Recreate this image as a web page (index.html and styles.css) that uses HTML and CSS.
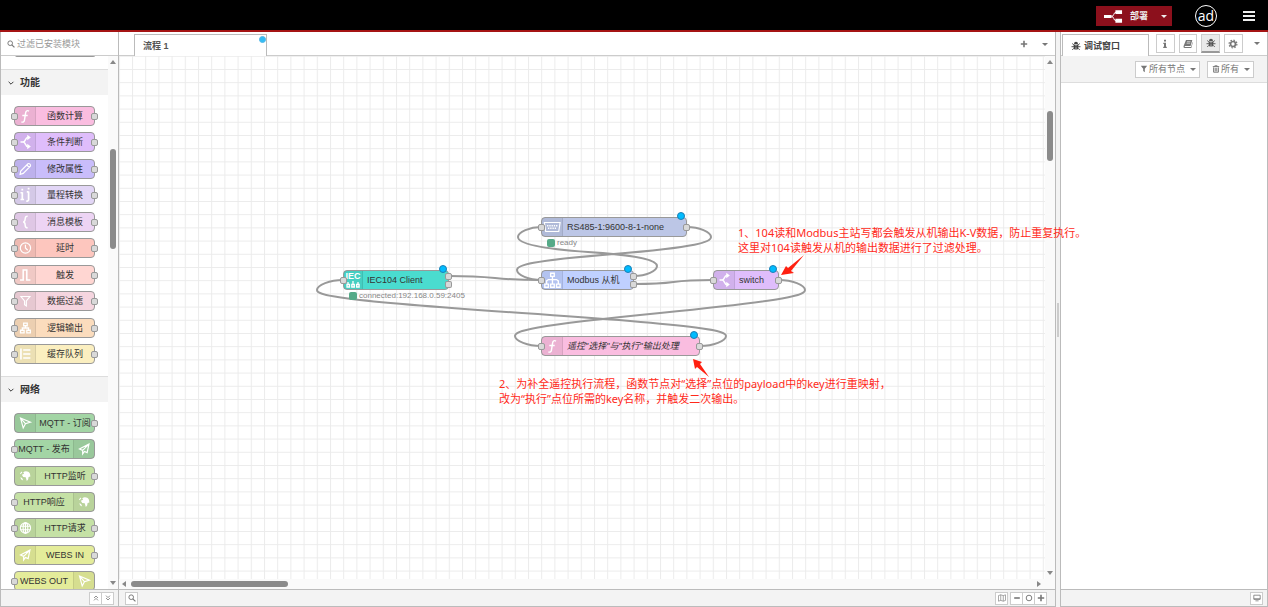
FILE: index.html
```html
<!DOCTYPE html>
<html lang="zh-CN">
<head>
<meta charset="utf-8">
<title>流程 1</title>
<link rel="stylesheet" href="styles.css">
</head>
<body>
<svg class="defs" aria-hidden="true">
  <symbol id="i-func" viewBox="0 0 20 20"><path d="M14.500 4.500c-2.500-1.200-3.600.2-3.900 2.500l-1.200 7.500c-.4 2-1.500 2.800-3.400 2M7 9.500h6" fill="none" stroke="currentColor" stroke-width="1.600"/></symbol>
  <symbol id="i-switch" viewBox="0 0 20 20"><path d="M5 10h3c3 0 2-5 5-5h1M8 10c3 0 2 5 5 5h1" fill="none" stroke="currentColor" stroke-width="1.700"/><path d="M12.500 2l4 3-4 3zM12.500 12l4 3-4 3z" fill="currentColor"/></symbol>
  <symbol id="i-edit" viewBox="0 0 20 20"><path d="M4.500 16l.8-3.800 8-8c1.500-1 3.500 1 2.700 2.700l-8 8zM12 5.500l2.800 2.800" fill="none" stroke="currentColor" stroke-width="1.300"/></symbol>
  <symbol id="i-range" viewBox="0 0 20 20"><path d="M7 7v8M5 7.500h2M5 15h4M14 6v9c0 1.500-1 2-2.500 1.500M12 6.500h2" fill="none" stroke="currentColor" stroke-width="1.900"/><path d="M6 3h2v2H6zM13 2h2v2h-2z" fill="currentColor"/></symbol>
  <symbol id="i-brace" viewBox="0 0 20 20"><path d="M13 3.500c-2.500 0-2.800.8-2.800 3 0 2.200-.4 3.300-2.200 3.500 1.800.2 2.200 1.300 2.200 3.500 0 2.200.3 3 2.800 3" fill="none" stroke="currentColor" stroke-width="1.600"/></symbol>
  <symbol id="i-clock" viewBox="0 0 20 20"><circle cx="10.500" cy="10" r="5.700" fill="none" stroke="currentColor" stroke-width="1.300"/><path d="M10.500 6.500V10l2.500 2.500" fill="none" stroke="currentColor" stroke-width="1.300"/></symbol>
  <symbol id="i-pulse" viewBox="0 0 20 20"><path d="M4.500 15.500h3.500V4.500h4v11h4" fill="none" stroke="currentColor" stroke-width="1.700"/></symbol>
  <symbol id="i-filter" viewBox="0 0 20 20"><path d="M5.500 5h10l-4 5v5.500l-2-1.500v-4z" fill="none" stroke="currentColor" stroke-width="1.300"/></symbol>
  <symbol id="i-logic" viewBox="0 0 20 20"><path d="M8.500 4.500h4v3h-4zM5 12.500h4v3H5zM12 12.500h4v3h-4zM10.500 7.500V10M7 12.500V10h7v2.500" fill="none" stroke="currentColor" stroke-width="1.400"/></symbol>
  <symbol id="i-queue" viewBox="0 0 20 20"><path d="M5.500 4v12M8 5.500h8M8 10h8M8 14.500h8" fill="none" stroke="currentColor" stroke-width="1.800"/></symbol>
  <symbol id="i-sub" viewBox="0 0 20 20"><path d="M5 4.500l11 4.500-5.500 1.700L8 15.500zM5 4.500l5.500 6.200" fill="none" stroke="currentColor" stroke-width="1.300"/></symbol>
  <symbol id="i-pub" viewBox="0 0 20 20"><path d="M15.500 4.500L5 10l3.500 1.500v4l2-2.800 3 1.300zM15.500 4.500l-7 7" fill="none" stroke="currentColor" stroke-width="1.300"/></symbol>
  <symbol id="i-earth" viewBox="0 0 20 20"><path d="M8 6c2-2 6-1.500 7.500 1.500l.5 3-2 .5-.5 3-1.500 1.500-1.200-4L8 11 6.500 8.500 9 7.500zM4.500 7l2-2 .5 1-2 2zM5 11l2 1.500 1 2.500-2.500-1.500z" fill="currentColor"/></symbol>
  <symbol id="i-globe" viewBox="0 0 20 20"><g fill="none" stroke="currentColor" stroke-width="1.200"><circle cx="10.500" cy="10" r="5.700"/><ellipse cx="10.500" cy="10" rx="2.600" ry="5.700"/><path d="M5 8h11M5 12h11M10.500 4v12"/></g></symbol>
  <symbol id="i-serial" viewBox="0 0 20 20"><path d="M1.500 5h17.500l-1.500 10H3z" fill="none" stroke="currentColor" stroke-width="1.300"/><path d="M4.500 8.500h12M5.500 11.500h10" fill="none" stroke="currentColor" stroke-width="1.700" stroke-dasharray="1.500 1"/></symbol>
  <symbol id="i-tree" viewBox="0 0 20 20"><path d="M8.500 2.500h4v3.500h-4zM2 14.500h4V18H2zM8.500 14.500h4V18h-4zM15 14.500h4V18h-4zM10.500 6v8.500M4 14.500V11l2-1.500h9l2 1.500v3.500" fill="none" stroke="currentColor" stroke-width="1.500"/></symbol>
  <symbol id="i-bus" viewBox="0 0 16 7"><path d="M3 3V1M8 3V0M13 3V1M2 3.500h2.500v2.500H2zM6.800 3.500h2.500v2.500H6.800zM11.600 3.500h2.500v2.500h-2.500z" fill="none" stroke="currentColor" stroke-width="1.300"/></symbol>
  <symbol id="i-search" viewBox="0 0 10 10"><circle cx="4" cy="4" r="2.900" fill="none" stroke="currentColor" stroke-width="1.200"/><path d="M6 6l3.300 3.300" stroke="currentColor" stroke-width="1.500"/></symbol>
  <symbol id="i-bug" viewBox="0 0 10 10"><path d="M3 3a2 2.200 0 0 1 4 0z" fill="currentColor"/><path d="M2.700 3.600h2v5.200c-1.200 0-2-.8-2-2.200zM5.300 3.600h2v3c0 1.400-.8 2.200-2 2.200z" fill="currentColor"/><path d="M1.200 2.500l1.800 1.600M8.800 2.500L7 4.100M.5 5.700h9M1.200 9L3 7.200M8.800 9L7 7.200" stroke="currentColor" stroke-width=".9"/></symbol>
  <symbol id="i-info" viewBox="0 0 10 10"><path d="M4 .8h2v1.800H4zM3.300 3.800H6v4h.8V9H3.200V7.800H4V5h-.7z" fill="currentColor"/></symbol>
  <symbol id="i-book" viewBox="0 0 10 10"><path d="M3 1h6.300L7.600 7H2.100c-.7 0-.6 1 0 1H8l1.500-5 .3.500L8.300 9H1.700C.4 9 .3 7.800.7 6.800z" fill="currentColor"/><path d="M4 2.700h3.500M3.600 4.200h3.500" stroke="#fff" stroke-width=".6"/></symbol>
  <symbol id="i-gear" viewBox="0 0 10 10"><circle cx="5" cy="5" r="2.500" fill="none" stroke="currentColor" stroke-width="1.700"/><circle cx="5" cy="5" r="3.900" fill="none" stroke="currentColor" stroke-width="1.200" stroke-dasharray="1.500 1.560"/></symbol>
  <symbol id="i-funnel" viewBox="0 0 10 10"><path d="M1 1h8L6 4.700V9L4 7.500V4.700z" fill="currentColor"/></symbol>
  <symbol id="i-trash" viewBox="0 0 10 10"><path d="M1 2h8M3.500 2V1h3v1M2 3v6h6V3M4 3.500V8M6 3.500V8" fill="none" stroke="currentColor" stroke-width="1.200"/></symbol>
  <symbol id="i-chev" viewBox="0 0 10 10"><path d="M2 3.500l3 3 3-3" fill="none" stroke="currentColor" stroke-width="1.200"/></symbol>
  <symbol id="i-up2" viewBox="0 0 10 10"><path d="M2.500 5L5 2.500 7.500 5M2.500 8L5 5.500 7.500 8" fill="none" stroke="currentColor" stroke-width="1"/></symbol>
  <symbol id="i-down2" viewBox="0 0 10 10"><path d="M2.500 2L5 4.500 7.500 2M2.500 5L5 7.500 7.500 5" fill="none" stroke="currentColor" stroke-width="1"/></symbol>
  <symbol id="i-map" viewBox="0 0 10 10"><path d="M.6 2l2.800-1 3.200 1 2.800-1v7l-2.800 1-3.200-1-2.800 1zM3.400 1v7M6.600 2v7" fill="none" stroke="currentColor" stroke-width=".8"/></symbol>
  <symbol id="i-minus" viewBox="0 0 10 10"><path d="M1.500 5h7" stroke="currentColor" stroke-width="2"/></symbol>
  <symbol id="i-plus" viewBox="0 0 10 10"><path d="M1 5h8M5 1v8" stroke="currentColor" stroke-width="2"/></symbol>
  <symbol id="i-circle" viewBox="0 0 10 10"><circle cx="5" cy="5" r="3.500" fill="none" stroke="currentColor" stroke-width="1.200"/></symbol>
  <symbol id="i-screen" viewBox="0 0 10 10"><path d="M1 1.500h8v5H1z" fill="none" stroke="currentColor"/><path d="M1 5.500h8v1.500H1zM3 8h4v1H3z" fill="currentColor"/></symbol>
</svg>

<header class="header">
  <button class="deploy" type="button">
    <svg class="deploy-icon" viewBox="0 0 20 14"><path d="M0 6h8v3H0zM12 1h7v4h-7zM12 10h7v4h-7z" fill="#fff"/><path d="M8 7.500c3 0 1.500-4.500 5-4.500M8 7.500c3 0 1.500 4.500 5 4.500" fill="none" stroke="#fff"/></svg>
    <span>部署</span><i class="caret"></i>
  </button>
  <button class="avatar" type="button">ad</button>
  <button class="menu" type="button" aria-label="菜单"><i></i><i></i><i></i></button>
</header>

<div class="main">
  <aside class="palette">
    <label class="search"><svg class="ic"><use href="#i-search"/></svg><input type="text" placeholder="过滤已安装模块" aria-label="过滤已安装模块"></label>
    <div class="palette-body">
      <div class="palette-list">
        <div class="node-remnant"></div>
        <button class="category" type="button"><svg class="ic"><use href="#i-chev"/></svg>功能</button>
        <div class="nodes nodes-func">
          <div class="node in out c-func"><span class="icon"><svg><use href="#i-func"/></svg></span><span class="label">函数计算</span></div>
          <div class="node in out c-switch"><span class="icon"><svg><use href="#i-switch"/></svg></span><span class="label">条件判断</span></div>
          <div class="node in out c-change"><span class="icon"><svg><use href="#i-edit"/></svg></span><span class="label">修改属性</span></div>
          <div class="node in out c-range"><span class="icon"><svg><use href="#i-range"/></svg></span><span class="label">量程转换</span></div>
          <div class="node in out c-template"><span class="icon"><svg><use href="#i-brace"/></svg></span><span class="label">消息模板</span></div>
          <div class="node in out c-delay"><span class="icon"><svg><use href="#i-clock"/></svg></span><span class="label">延时</span></div>
          <div class="node in out c-trigger"><span class="icon"><svg><use href="#i-pulse"/></svg></span><span class="label">触发</span></div>
          <div class="node in out c-filter"><span class="icon"><svg><use href="#i-filter"/></svg></span><span class="label">数据过滤</span></div>
          <div class="node in out c-logic"><span class="icon"><svg><use href="#i-logic"/></svg></span><span class="label">逻辑输出</span></div>
          <div class="node in out c-queue"><span class="icon"><svg><use href="#i-queue"/></svg></span><span class="label">缓存队列</span></div>
        </div>
        <button class="category" type="button"><svg class="ic"><use href="#i-chev"/></svg>网络</button>
        <div class="nodes nodes-net">
          <div class="node out c-mqtt"><span class="icon"><svg><use href="#i-sub"/></svg></span><span class="label">MQTT - 订阅</span></div>
          <div class="node in flip c-mqtt"><span class="icon"><svg><use href="#i-pub"/></svg></span><span class="label">MQTT - 发布</span></div>
          <div class="node out c-http"><span class="icon"><svg><use href="#i-earth"/></svg></span><span class="label">HTTP监听</span></div>
          <div class="node in flip c-http"><span class="icon"><svg><use href="#i-earth"/></svg></span><span class="label">HTTP响应</span></div>
          <div class="node in out c-http"><span class="icon"><svg><use href="#i-globe"/></svg></span><span class="label">HTTP请求</span></div>
          <div class="node out c-ws"><span class="icon"><svg><use href="#i-pub"/></svg></span><span class="label">WEBS IN</span></div>
          <div class="node in flip c-ws"><span class="icon"><svg><use href="#i-sub"/></svg></span><span class="label">WEBS OUT</span></div>
        </div>
      </div>
      <div class="vbar"><i class="arrow up"></i><i class="thumb thumb-palette"></i><i class="arrow down"></i></div>
    </div>
    <footer class="foot foot-palette">
      <button class="fbtn" type="button" aria-label="全部折叠"><svg class="ic"><use href="#i-up2"/></svg></button>
      <button class="fbtn" type="button" aria-label="全部展开"><svg class="ic"><use href="#i-down2"/></svg></button>
    </footer>
  </aside>

  <main class="workspace">
    <div class="tabs">
      <button class="tab" type="button">流程 1<i class="dot tab-dot"></i></button>
      <button class="plain" type="button" aria-label="新增"><svg class="ic"><use href="#i-plus"/></svg></button>
      <button class="plain" type="button" aria-label="流程列表"><i class="caret"></i></button>
    </div>
    <div class="chart">
      <div class="canvas">
        <svg class="wires">
          <defs>
            <pattern id="grid" width="13.200" height="13.200" patternUnits="userSpaceOnUse" x="132" y="69"><path d="M0 .5h13.200M.5 0v13.200" stroke="#ebebeb" fill="none"/></pattern>
          </defs>
          <g transform="translate(-119 -56)">
            <rect x="119" y="56" width="3000" height="3000" fill="url(#grid)"/>
            <g fill="none" stroke="#999" stroke-width="2">
              <path d="M449 276C499 276 491 280 541 280"/>
              <path d="M634 284C684 284 663 280 713 280"/>
              <path d="M687 227C699 227 711 232 711 237S699 247 614 254S517 265 517 270S529 280 541 280"/>
              <path d="M634 276C646 276 657 271 657 266S646 256 588 252S518 242 518 237S530 227 541 227"/>
              <path d="M779 280C792 280 805 285 805 290S792 300 660 313S515 331 515 336S528 346 541 346"/>
              <path d="M700 346C713 346 726 341 726 336S713 326 522 313S317 295 317 290S330 280 343 280"/>
            </g>
          </g>
        </svg>
        <div class="node in out2 c-iec n-iec"><span class="icon icon-iec"><b>IEC</b><svg><use href="#i-bus"/></svg></span><span class="label">IEC104 Client</span><i class="dot"></i><span class="status">connected:192.168.0.59:2405</span></div>
        <div class="node in out c-serial n-serial"><span class="icon"><svg><use href="#i-serial"/></svg></span><span class="label">RS485-1:9600-8-1-none</span><i class="dot"></i><span class="status">ready</span></div>
        <div class="node in out2 c-modbus n-modbus"><span class="icon"><svg><use href="#i-tree"/></svg></span><span class="label">Modbus 从机</span><i class="dot"></i></div>
        <div class="node in out c-switch n-switch"><span class="icon"><svg><use href="#i-switch"/></svg></span><span class="label">switch</span><i class="dot"></i></div>
        <div class="node in out c-func n-func"><span class="icon"><svg><use href="#i-func"/></svg></span><span class="label"><em>遥控"选择"与"执行"输出处理</em></span><i class="dot"></i></div>
        <svg class="wires"><g transform="translate(-119 -56)" fill="#ff2010"><path d="M781 275l5-9 2 2 16-13-13 16 3 2z"/><path d="M693 359l9 3-2 2 9 13-12-10-2 2z"/></g></svg>
        <p class="note note-1">1、104读和Modbus主站写都会触发从机输出K-V数据，防止重复执行。<br>这里对104读触发从机的输出数据进行了过滤处理。</p>
        <p class="note note-2">2、为补全遥控执行流程，函数节点对“选择”点位的payload中的key进行重映射，<br>改为“执行”点位所需的key名称，并触发二次输出。</p>
      </div>
      <div class="vbar"><i class="arrow up"></i><i class="thumb thumb-chart"></i><i class="arrow down"></i></div>
      <div class="hbar"><i class="arrow left"></i><i class="thumb-h"></i><i class="arrow right"></i></div>
    </div>
    <footer class="foot foot-work">
      <button class="fbtn" type="button" aria-label="搜索"><svg class="ic"><use href="#i-search"/></svg></button>
      <button class="fbtn map" type="button" aria-label="导航"><svg class="ic"><use href="#i-map"/></svg></button>
      <button class="fbtn" type="button" aria-label="缩小"><svg class="ic"><use href="#i-minus"/></svg></button>
      <button class="fbtn" type="button" aria-label="重置"><svg class="ic"><use href="#i-circle"/></svg></button>
      <button class="fbtn" type="button" aria-label="放大"><svg class="ic"><use href="#i-plus"/></svg></button>
    </footer>
  </main>

  <div class="separator"><i></i></div>

  <aside class="sidebar">
    <div class="side-tabs">
      <button class="side-tab" type="button"><svg class="ic"><use href="#i-bug"/></svg>调试窗口</button>
      <button class="sbtn" type="button" aria-label="信息"><svg class="ic"><use href="#i-info"/></svg></button>
      <button class="sbtn" type="button" aria-label="帮助"><svg class="ic"><use href="#i-book"/></svg></button>
      <button class="sbtn active" type="button" aria-label="调试"><svg class="ic"><use href="#i-bug"/></svg></button>
      <button class="sbtn" type="button" aria-label="配置"><svg class="ic"><use href="#i-gear"/></svg></button>
      <button class="plain" type="button" aria-label="更多"><i class="caret"></i></button>
    </div>
    <div class="side-tools">
      <button class="tool" type="button"><svg class="ic"><use href="#i-funnel"/></svg>所有节点<i class="caret"></i></button>
      <button class="tool" type="button"><svg class="ic"><use href="#i-trash"/></svg>所有<i class="caret"></i></button>
    </div>
    <div class="side-body"></div>
    <footer class="foot foot-side">
      <button class="fbtn" type="button" aria-label="打开窗口"><svg class="ic"><use href="#i-screen"/></svg></button>
    </footer>
  </aside>
</div>
</body>
</html>
```
FILE: styles.css
```css
*, *::before, *::after { box-sizing: border-box; }
body {
  margin: 0;
  height: 100vh;
  display: flex;
  flex-direction: column;
  overflow: hidden;
  background: #f3f3f3;
  color: #444;
  font: 9px/12px "Liberation Sans", "Noto Sans CJK SC", sans-serif;
}
button, input { font: inherit; color: inherit; margin: 0; padding: 0; border: 0; background: none; }
.defs { position: absolute; width: 0; height: 0; }
.ic { width: 8px; height: 8px; flex: none; display: block; }
.caret { border: 3px solid transparent; border-top-color: currentColor; border-bottom: 0; }

.header {
  flex: none;
  height: 32px;
  background: #000;
  border-bottom: 2px solid #a51414;
  display: flex;
  align-items: center;
  justify-content: flex-end;
  padding: 2px 13px 0 0;
  color: #eee;
}
.deploy { display: flex; align-items: center; width: 76px; height: 20px; padding: 0 5px 0 8px; background: #8c101c; font-weight: bold; }
.deploy-icon { width: 19px; height: 14px; margin-right: 7px; }
.deploy .caret { margin-left: auto; }
.avatar { width: 22px; height: 22px; margin: 0 26px 0 23px; border: 1px solid #fff; border-radius: 50%; font: 14px/18px "Open Sans", sans-serif; color: #fff; }
.menu { width: 12px; display: flex; flex-direction: column; gap: 2px; }
.menu i { height: 2px; background: #eee; }

.main { flex: 1; min-height: 0; display: grid; grid-template-columns: 119px minmax(0, 1fr) 4px 208px; }
.palette, .workspace, .sidebar { min-height: 0; display: flex; flex-direction: column; background: #fff; border: 1px solid #bbb; border-top: 0; }
.workspace { border-left: 0; }

.search { flex: none; height: 24px; display: flex; align-items: center; gap: 2px; padding-left: 6px; border-bottom: 1px solid #ccc; color: #777; }
.search input { width: 90px; outline: 0; }
.search input::placeholder { color: #999; opacity: 1; }
.palette-body { flex: 1; min-height: 0; display: flex; }
.palette-list { flex: 1; overflow: hidden; }
.node-remnant { height: 2px; width: 80px; margin: -1px 0 12px 14px; border: 1px solid #999; border-top: 0; border-radius: 0 0 4px 4px; }
.category { width: 100%; height: 26px; display: flex; align-items: center; gap: 5px; padding: 0 6px; background: #f3f3f3; border-top: 1px solid #ddd; font-size: 10px; font-weight: bold; color: #333; }
.nodes { display: flex; flex-direction: column; justify-content: space-between; margin: 11px 13px 12px; }
.nodes-func { height: 258px; }
.nodes-net { height: 178px; }

.node { position: relative; height: 20px; display: flex; border: 1px solid #999; border-radius: 4px; color: #333; }
.node .icon { flex: none; width: 21px; background: rgba(0, 0, 0, .06); border-right: 1px solid rgba(0, 0, 0, .08); color: #fff; }
.node .icon svg { display: block; width: 20px; height: 18px; }
.node .label { flex: 1; display: flex; align-items: center; justify-content: center; white-space: nowrap; }
.flip { flex-direction: row-reverse; }
.flip .icon { border-right: 0; border-left: 1px solid rgba(0, 0, 0, .08); }
.in::before, .out::after, .out2::after {
  content: "";
  position: absolute;
  top: 6px;
  width: 7px;
  height: 7px;
  border: 1px solid #999;
  border-radius: 2px;
  background: #d9d9d9;
}
.in::before { left: -4px; }
.out::after { right: -4px; }
.out2::after { right: -4px; top: 2px; box-shadow: 0 8px 0 -1px #d9d9d9, 0 8px 0 0 #999; }
.c-func { background: #fabde0; }
.c-switch { background: #dfbdfb; }
.c-change { background: #c9bdfb; }
.c-range { background: #e2d6f6; }
.c-template { background: #edd4f4; }
.c-delay { background: #fdc6be; }
.c-trigger { background: #ffd6d2; }
.c-filter { background: #f5d5df; }
.c-logic { background: #fbdcbd; }
.c-queue { background: #fbefc0; }
.c-mqtt { background: #a3d5a5; }
.c-http { background: #c5e1a5; }
.c-ws { background: #e4ec9a; }
.c-iec { background: #4adccf; }
.c-serial { background: #bcc6e6; }
.c-modbus { background: #bfd0ff; }

.vbar { flex: none; width: 10px; display: flex; flex-direction: column; align-items: center; padding: 4px 0; background: #fafafa; }
.arrow { border: 3px solid transparent; }
.arrow.up { border-bottom: 4px solid #888; border-top: 0; }
.arrow.down { border-top: 4px solid #888; border-bottom: 0; margin-top: auto; }
.arrow.left { border-right: 4px solid #888; border-left: 0; }
.arrow.right { border-left: 4px solid #888; border-right: 0; margin-left: auto; }
.thumb { width: 6px; border-radius: 3px; background: #8b8b8b; }
.thumb-palette { height: 100px; margin-top: 85px; }
.thumb-chart { height: 50px; margin-top: 47px; }

.foot { flex: none; height: 17px; display: flex; align-items: center; background: #f3f3f3; border-top: 1px solid #bbb; color: #777; }
.fbtn { width: 13px; height: 13px; display: flex; align-items: center; justify-content: center; background: #fff; border: 1px solid #ccc; }
.fbtn + .fbtn { width: 12px; border-left: 0; }
.foot-palette { justify-content: flex-end; padding-right: 4px; }
.foot-work { padding: 0 8px 0 6px; }
.foot-work .fbtn.map, .foot-work .map + .fbtn { width: 13px; border-left: 1px solid #ccc; }
.foot-work .map { margin: 0 2px 0 auto; }
.foot-side { justify-content: flex-end; padding-right: 4px; }

.tabs { flex: none; height: 24px; display: flex; align-items: flex-end; border-bottom: 1px solid #ccc; color: #777; padding: 0 0 0 15px; }
.tab { position: relative; width: 133px; height: 22px; margin: 0 auto -1px 0; padding-left: 8px; text-align: left; background: #fff; border: 1px solid #bbb; border-bottom: 0; font-weight: bold; color: #555; }
.dot { position: absolute; top: -6px; right: 1px; width: 8px; height: 8px; border: 1px solid #1c7fb5; border-radius: 50%; background: #00bcff; }
.tab .tab-dot { top: 1px; right: 0; width: 7px; height: 7px; border-color: #53b8e8; background: #33bdf5; }
.plain { width: 21px; height: 22px; display: flex; align-items: center; justify-content: center; color: #777; }

.chart { flex: 1; min-height: 0; display: grid; grid-template: minmax(0, 1fr) 10px / minmax(0, 1fr) 10px; background: #fafafa; }
.canvas { position: relative; background: #fff; }
.wires { position: absolute; width: 100%; height: 100%; }
.hbar { display: flex; align-items: center; padding: 0 4px 0 3px; }
.thumb-h { width: 157px; height: 6px; margin-left: 5px; border-radius: 3px; background: #8b8b8b; }

.canvas .node { position: absolute; }
.canvas .label { justify-content: flex-start; padding-left: 4px; }
.n-iec { left: 224px; top: 214px; width: 106px; }
.n-serial { left: 422px; top: 161px; width: 146px; }
.n-modbus { left: 422px; top: 214px; width: 93px; }
.n-switch { left: 594px; top: 214px; width: 66px; }
.n-func { left: 422px; top: 280px; width: 159px; }
.node .icon-iec { width: 19px; display: flex; flex-direction: column; align-items: center; justify-content: flex-end; padding-bottom: 1px; }
.icon-iec b { font-size: 9px; line-height: 9px; }
.node .icon-iec svg { width: 16px; height: 7px; }
.status { position: absolute; left: 5px; top: 20px; display: flex; align-items: center; gap: 2px; font-size: 8px; line-height: 10px; color: #888; white-space: nowrap; }
.status::before { content: ""; width: 8px; height: 8px; border-radius: 2px; background: #5a8; }
.note { position: absolute; z-index: 2; margin: 0; font: 11px/15px "Noto Sans", "Noto Sans CJK SC", sans-serif; color: #ff2a1a; white-space: nowrap; }
.note-1 { left: 619px; top: 169px; }
.note-2 { left: 380px; top: 320px; }

.separator { display: flex; align-items: center; justify-content: center; }
.separator i { width: 2px; height: 34px; background: #ccc; }

.side-tabs { flex: none; height: 24px; display: flex; align-items: center; gap: 4px; padding-left: 1px; border-bottom: 1px solid #ccc; color: #777; }
.side-tabs .ic { width: 10px; height: 10px; }
.side-tab { width: 89px; height: 22px; margin-right: 3px; margin-bottom: -3px; display: flex; align-items: center; gap: 3px; padding-left: 8px; background: #fff; border: 1px solid #bbb; border-bottom: 0; font-weight: bold; color: #444; }
.sbtn { width: 19px; height: 19px; display: flex; align-items: center; justify-content: center; background: #fff; border: 1px solid #ccc; }
.sbtn.active { background: #e9e9e9; border-bottom: 2px solid #999; color: #555; }
.side-tools { flex: none; height: 27px; display: flex; align-items: center; justify-content: flex-end; gap: 7px; padding-right: 13px; background: #f3f3f3; border-bottom: 1px solid #ddd; }
.tool { height: 17px; display: flex; align-items: center; gap: 1px; padding: 0 3px 0 4px; background: #fff; border: 1px solid #ccc; color: #777; }
.tool .caret { margin-left: 4px; }
.side-body { flex: 1; }
```
